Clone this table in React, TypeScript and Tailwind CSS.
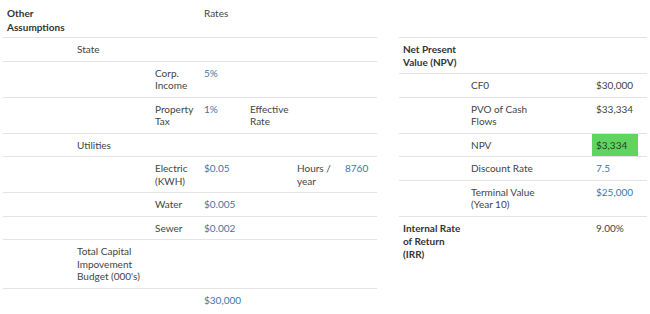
import React from "react";

const td = "px-[4px] pt-[5px] pb-[5px] align-top";
const row = "border-b border-[#e3e3e3]";
const blue = "text-[#3b78a8]";
const th = "px-[4px] pt-[7px] pb-[3px] align-top leading-[13.5px]";

export default function App() {
  return (
    <div
      className="w-[650px] h-[314px] bg-white flex items-start overflow-hidden text-[10px] leading-[12.5px] text-[#444]"
      style={{ fontFamily: "Lato, 'Open Sans', sans-serif" }}
    >
      <div className="ml-[3px] w-[374px]">
        <table className="w-[374px] table-fixed border-collapse">
          <colgroup>
            <col className="w-[70px]" />
            <col className="w-[78px]" />
            <col className="w-[49px]" />
            <col className="w-[46px]" />
            <col className="w-[47px]" />
            <col className="w-[48px]" />
            <col className="w-[36px]" />
          </colgroup>
          <tbody>
            <tr className={row}>
              <td className={`${th} font-bold text-[#333]`}>Other Assumptions</td>
              <td className={th}></td>
              <td className={th}></td>
              <td className={th}>Rates</td>
              <td className={th}></td>
              <td className={th}></td>
              <td className={th}></td>
            </tr>
            <tr className={row}>
              <td className={td}></td>
              <td className={td}>State</td>
              <td className={td}></td>
              <td className={td}></td>
              <td className={td}></td>
              <td className={td}></td>
              <td className={td}>&nbsp;</td>
            </tr>
            <tr className={row}>
              <td className={td}></td>
              <td className={td}></td>
              <td className={td}>Corp. Income</td>
              <td className={`${td} ${blue}`}>5%</td>
              <td className={td}></td>
              <td className={td}></td>
              <td className={td}></td>
            </tr>
            <tr className={row}>
              <td className={td}></td>
              <td className={td}></td>
              <td className={td}>Property Tax</td>
              <td className={`${td} ${blue}`}>1%</td>
              <td className={td}>Effective Rate</td>
              <td className={td}></td>
              <td className={td}></td>
            </tr>
            <tr className={row}>
              <td className={td}></td>
              <td className={td}>Utilities</td>
              <td className={td}></td>
              <td className={td}></td>
              <td className={td}></td>
              <td className={td}></td>
              <td className={td}>&nbsp;</td>
            </tr>
            <tr className={row}>
              <td className={td}></td>
              <td className={td}></td>
              <td className={td}>Electric (KWH)</td>
              <td className={`${td} ${blue}`}>$0.05</td>
              <td className={td}></td>
              <td className={td}>Hours / year</td>
              <td className={`${td} ${blue}`}>8760</td>
            </tr>
            <tr className={row}>
              <td className={td}></td>
              <td className={td}></td>
              <td className={td}>Water</td>
              <td className={`${td} ${blue}`}>$0.005</td>
              <td className={td}></td>
              <td className={td}></td>
              <td className={td}></td>
            </tr>
            <tr className={row}>
              <td className={td}></td>
              <td className={td}></td>
              <td className={td}>Sewer</td>
              <td className={`${td} ${blue}`}>$0.002</td>
              <td className={td}></td>
              <td className={td}></td>
              <td className={td}></td>
            </tr>
            <tr className={row}>
              <td className={td}></td>
              <td className={td}>Total Capital Impovement Budget (000's)</td>
              <td className={td}></td>
              <td className={td}></td>
              <td className={td}></td>
              <td className={td}></td>
              <td className={td}></td>
            </tr>
            <tr>
              <td className={td}></td>
              <td className={td}></td>
              <td className={td}></td>
              <td className={`${td} ${blue}`}>$30,000</td>
              <td className={td}></td>
              <td className={td}></td>
              <td className={td}></td>
            </tr>
          </tbody>
        </table>
      </div>

      <div className="ml-[22px] mt-[37px] w-[248px]">
        <table className="w-[248px] table-fixed border-collapse border-t border-[#e3e3e3]">
          <colgroup>
            <col className="w-[68px]" />
            <col className="w-[72px]" />
            <col className="w-[53px]" />
            <col className="w-[46px]" />
            <col className="w-[9px]" />
          </colgroup>
          <tbody>
            <tr className={row}>
              <td className={`${td} font-bold text-[#333]`}>Net Present Value (NPV)</td>
              <td className={td}></td>
              <td className={td}></td>
              <td className={td}></td>
              <td className={td}></td>
            </tr>
            <tr className={row}>
              <td className={td}></td>
              <td className={td}>CF0</td>
              <td className={td}></td>
              <td className={td}>$30,000</td>
              <td className={td}></td>
            </tr>
            <tr className={row}>
              <td className={td}></td>
              <td className={td}>PVO of Cash Flows</td>
              <td className={td}></td>
              <td className={td}>$33,334</td>
              <td className={td}></td>
            </tr>
            <tr className={row}>
              <td className={td}></td>
              <td className={td}>NPV</td>
              <td className={td}></td>
              <td className={`${td} bg-[#5fd55f] text-[#2f3a2f]`}>$3,334</td>
              <td className={td}></td>
            </tr>
            <tr className={row}>
              <td className={td}></td>
              <td className={td}>Discount Rate</td>
              <td className={td}></td>
              <td className={`${td} ${blue}`}>7.5</td>
              <td className={td}></td>
            </tr>
            <tr className={row}>
              <td className={td}></td>
              <td className={td}>Terminal Value (Year 10)</td>
              <td className={td}></td>
              <td className={`${td} ${blue}`}>$25,000</td>
              <td className={td}></td>
            </tr>
            <tr>
              <td className={`${td} font-bold text-[#333] leading-[13px]`}>Internal Rate of Return (IRR)</td>
              <td className={td}></td>
              <td className={td}></td>
              <td className={td}>9.00%</td>
              <td className={td}></td>
            </tr>
          </tbody>
        </table>
      </div>
    </div>
  );
}
